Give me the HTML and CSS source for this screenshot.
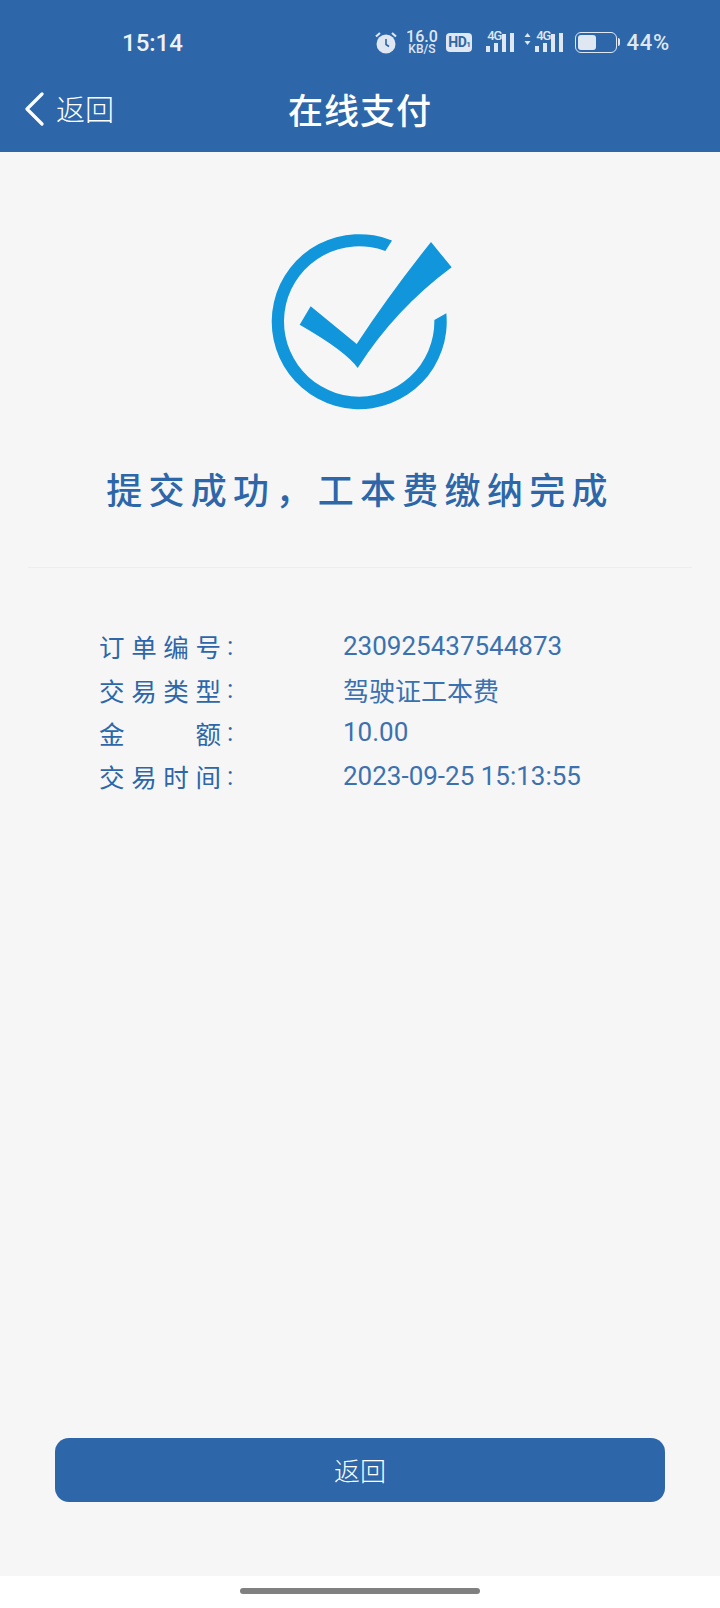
FILE: index.html
```html
<!DOCTYPE html>
<html lang="zh-CN">
<head>
  <meta charset="UTF-8" />
  <meta name="viewport" content="width=device-width, initial-scale=1.0"/>
  <title>在线支付</title>
  <link rel="stylesheet" href="styles.css">
</head>
<body>
  <header class="top">
    <div class="status">
      <span class="time">15:14</span>
      <div class="status-icons">
        <svg class="alarm" viewBox="0 0 22 23" width="22" height="23">
          <circle cx="11" cy="13" r="9.5" fill="#dfe7f3"/>
          <path d="M11 8v5.5l3 2" fill="none" stroke="#2d66a9" stroke-width="1.6"/>
          <path d="M1 5.5 5 2M21 5.5 17 2" fill="none" stroke="#dfe7f3" stroke-width="2.2"/>
        </svg>
        <div class="speed"><span class="speed-num">16.0</span><span class="speed-unit">KB/S</span></div>
        <span class="hd">HD<small>1</small></span>
        <div class="signal">
          <span class="net">4G</span>
          <svg viewBox="0 0 30 20" width="30" height="20"><path d="M1 14h4v6H1zM9 11h4v9H9zM17 2h4v18h-4zM25 1h4v19h-4z" fill="#dfe7f3"/></svg>
        </div>
        <div class="signal signal-data">
          <svg class="arrows" viewBox="0 0 7 14" width="7" height="14"><path d="M3.5 1 6.5 5h-6zM3.5 13 .5 9h6z" fill="#dfe7f3"/></svg>
          <span class="net">4G</span>
          <svg viewBox="0 0 30 20" width="30" height="20"><path d="M1 14h4v6H1zM9 11h4v9H9zM17 2h4v18h-4zM25 1h4v19h-4z" fill="#dfe7f3"/></svg>
        </div>
        <div class="battery"><div class="battery-level"></div></div>
        <div class="battery-tip"></div>
        <span class="percent">44%</span>
      </div>
    </div>
    <nav class="nav">
      <a class="back">
        <svg viewBox="0 0 22 34" width="22" height="34"><path d="M19 2 4 17l15 15" fill="none" stroke="#fff" stroke-width="3.2" stroke-linecap="round" stroke-linejoin="round"/></svg>
        <span>返回</span>
      </a>
      <h1 class="title">在线支付</h1>
    </nav>
  </header>

  <main class="content">
    <svg class="check" viewBox="0 0 660 600" width="220" height="200">
      <path d="M426 61.5A262.5 262.5 0 1 0 589 280L553 300A225.5 225.5 0 1 1 406 93Z" fill="#1296db"/>
      <path d="M182 259 320 372Q420 220 543 66L605 142Q436 267 323 444Q290 395 149 314Z" fill="#1296db"/>
    </svg>
    <h2 class="result">提交成功，工本费缴纳完成</h2>
    <hr class="divider">
    <div class="info">
      <div class="row"><span class="label">订单编号</span><span class="colon">:</span><span class="value">230925437544873</span></div>
      <div class="row"><span class="label">交易类型</span><span class="colon">:</span><span class="value">驾驶证工本费</span></div>
      <div class="row"><span class="label">金 额</span><span class="colon">:</span><span class="value">10.00</span></div>
      <div class="row"><span class="label">交易时间</span><span class="colon">:</span><span class="value">2023-09-25 15:13:55</span></div>
    </div>
    <button class="btn">返回</button>
  </main>

  <footer class="home"><div class="home-bar"></div></footer>
</body>
</html>
```

FILE: styles.css
```css
* {
  box-sizing: border-box;
}

body {
  margin: 0;
  height: 1608px;
  display: flex;
  flex-direction: column;
  font-family: Roboto, "Noto Sans CJK SC", sans-serif;
  background: #fff;
}

.top {
  background: #2d66a9;
  color: #fff;
}

.status {
  height: 68px;
  padding: 18px 51px 0 122px;
  display: flex;
  align-items: center;
  justify-content: space-between;
}

.time {
  font-size: 24px;
  font-weight: 500;
  color: #eef2f8;
}

.status-icons {
  display: flex;
  align-items: center;
  margin-top: -2px;
  color: #dfe7f3;
}

.alarm {
  margin-right: 9px;
}

.speed {
  display: flex;
  flex-direction: column;
  align-items: center;
  width: 31px;
  margin-right: 9px;
  font-weight: 500;
  line-height: 1;
}

.speed-num {
  font-size: 16px;
  line-height: 14px;
}

.speed-unit {
  font-size: 12px;
  line-height: 10px;
}

.hd {
  width: 26px;
  height: 19px;
  margin-right: 13px;
  border-radius: 4px;
  background: #dfe7f3;
  color: #2d66a9;
  font-size: 14px;
  font-weight: 700;
  line-height: 19px;
  letter-spacing: -0.5px;
  text-align: center;
}

.hd small {
  font-size: 8px;
}

.signal {
  position: relative;
  display: flex;
  align-items: center;
  margin-right: 9px;
}

.signal-data {
  margin-right: 11px;
}

.signal .net {
  position: absolute;
  right: 14px;
  top: -2px;
  font-size: 13px;
  font-weight: 500;
  line-height: 12px;
  letter-spacing: -1px;
}

.signal .arrows {
  margin-right: 3px;
  align-self: flex-start;
}

.battery {
  width: 42px;
  height: 21px;
  padding: 2px;
  border: 1.5px solid #dfe7f3;
  border-radius: 6px;
}

.battery-level {
  width: 18px;
  height: 100%;
  border-radius: 3px;
  background: #dfe7f3;
}

.battery-tip {
  width: 2px;
  height: 8px;
  margin: 0 6px 0 1px;
  border-radius: 0 2px 2px 0;
  background: #dfe7f3;
}

.percent {
  font-size: 22px;
  font-weight: 500;
  letter-spacing: 0.8px;
  margin-right: -1px;
}

.nav {
  height: 84px;
  padding-bottom: 4px;
  display: grid;
  grid-template-columns: 1fr auto 1fr;
  align-items: center;
}

.back {
  grid-column: 1;
  grid-row: 1;
  display: flex;
  align-items: center;
  gap: 11px;
  padding-left: 23px;
  font-size: 29px;
  font-weight: 300;
}

.back svg {
  margin-top: 2px;
}

.title {
  grid-column: 2;
  margin: 0;
  font-size: 35px;
  font-weight: 500;
  letter-spacing: 1px;
}

.content {
  flex: 1;
  display: flex;
  flex-direction: column;
  background: #f6f6f6;
  padding: 68px 0 74px;
}

.check {
  align-self: center;
  flex: none;
}

.result {
  margin: 46px 0 0;
  font-size: 36px;
  font-weight: 500;
  line-height: 52px;
  letter-spacing: 6.3px;
  text-align: center;
  color: #2d66a9;
}

.divider {
  width: 664px;
  margin: 49px auto 0;
  border: 0;
  border-top: 1px solid #eceded;
}

.info {
  margin-top: 56px;
  padding-left: 99px;
  display: flex;
  flex-direction: column;
  color: #2d66a9;
}

.row {
  display: flex;
  align-items: center;
  height: 43.4px;
  font-size: 26px;
  font-weight: 400;
}

.label {
  width: 122px;
  font-size: 25.5px;
  text-align-last: justify;
}

.colon {
  width: 122px;
  padding-left: 6px;
}

.value {
  color: #3b71af;
}

.btn {
  width: 610px;
  height: 64px;
  margin: auto auto 0;
  padding-bottom: 3px;
  border: none;
  border-radius: 14px;
  background: #2d66a9;
  color: #fff;
  font: 300 26px Roboto, "Noto Sans CJK SC", sans-serif;
}

.home {
  height: 32px;
  padding-top: 12px;
}

.home-bar {
  width: 240px;
  height: 6px;
  margin: 0 auto;
  border-radius: 3px;
  background: #808080;
}
```
